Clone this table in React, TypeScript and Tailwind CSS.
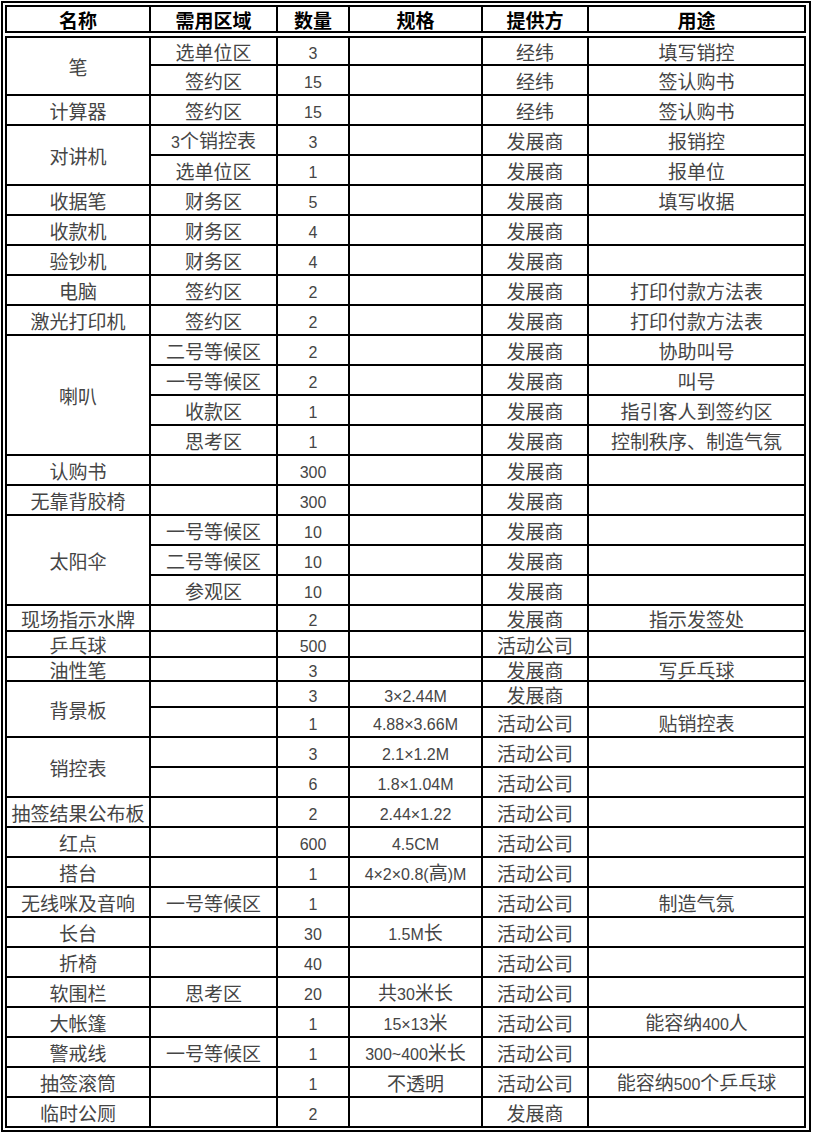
import React from 'react';

type Cell = string | { t: string; rs: number };

const rows: Cell[][] = [
  [{ t: '笔', rs: 2 }, '选单位区', '3', '', '经纬', '填写销控'],
  ['签约区', '15', '', '经纬', '签认购书'],
  ['计算器', '签约区', '15', '', '经纬', '签认购书'],
  [{ t: '对讲机', rs: 2 }, '3个销控表', '3', '', '发展商', '报销控'],
  ['选单位区', '1', '', '发展商', '报单位'],
  ['收据笔', '财务区', '5', '', '发展商', '填写收据'],
  ['收款机', '财务区', '4', '', '发展商', ''],
  ['验钞机', '财务区', '4', '', '发展商', ''],
  ['电脑', '签约区', '2', '', '发展商', '打印付款方法表'],
  ['激光打印机', '签约区', '2', '', '发展商', '打印付款方法表'],
  [{ t: '喇叭', rs: 4 }, '二号等候区', '2', '', '发展商', '协助叫号'],
  ['一号等候区', '2', '', '发展商', '叫号'],
  ['收款区', '1', '', '发展商', '指引客人到签约区'],
  ['思考区', '1', '', '发展商', '控制秩序、制造气氛'],
  ['认购书', '', '300', '', '发展商', ''],
  ['无靠背胶椅', '', '300', '', '发展商', ''],
  [{ t: '太阳伞', rs: 3 }, '一号等候区', '10', '', '发展商', ''],
  ['二号等候区', '10', '', '发展商', ''],
  ['参观区', '10', '', '发展商', ''],
  ['现场指示水牌', '', '2', '', '发展商', '指示发签处'],
  ['乒乓球', '', '500', '', '活动公司', ''],
  ['油性笔', '', '3', '', '发展商', '写乒乓球'],
  [{ t: '背景板', rs: 2 }, '', '3', '3×2.44M', '发展商', ''],
  ['', '1', '4.88×3.66M', '活动公司', '贴销控表'],
  [{ t: '销控表', rs: 2 }, '', '3', '2.1×1.2M', '活动公司', ''],
  ['', '6', '1.8×1.04M', '活动公司', ''],
  ['抽签结果公布板', '', '2', '2.44×1.22', '活动公司', ''],
  ['红点', '', '600', '4.5CM', '活动公司', ''],
  ['搭台', '', '1', '4×2×0.8(高)M', '活动公司', ''],
  ['无线咪及音响', '一号等候区', '1', '', '活动公司', '制造气氛'],
  ['长台', '', '30', '1.5M长', '活动公司', ''],
  ['折椅', '', '40', '', '活动公司', ''],
  ['软围栏', '思考区', '20', '共30米长', '活动公司', ''],
  ['大帐篷', '', '1', '15×13米', '活动公司', '能容纳400人'],
  ['警戒线', '一号等候区', '1', '300~400米长', '活动公司', ''],
  ['抽签滚筒', '', '1', '不透明', '活动公司', '能容纳500个乒乓球'],
  ['临时公厕', '', '2', '', '发展商', ''],
];

const headers = ['名称', '需用区域', '数量', '规格', '提供方', '用途'];

const latin = /^[0-9A-Za-z.×~()]+$/;

// latin runs get Arial-width text, the rest stays CJK
const Mixed = ({ text }: { text: string }) => (
  <span className="leading-[20px] relative top-[1px]">
    {text.split(/([0-9A-Za-z.×~()]+)/).map((part, i) =>
      latin.test(part) ? (
        <span key={i} className="font-['Liberation_Sans',Arial,sans-serif] text-[16px]">
          {part}
        </span>
      ) : (
        part
      )
    )}
  </span>
);

export default function App() {
  return (
    <div className="bg-white min-h-screen">
      <div className="ml-[1px] mt-[1px] w-[810px] border-2 border-black pl-[2px] pr-[3px] py-[2px] font-['Noto_Sans_CJK_SC','Liberation_Sans',sans-serif]">
        <div className="grid grid-cols-[142px_125px_70px_131px_104px_215px] gap-[2px] bg-black border-2 border-black">
          {headers.map(h => (
            <div key={h} className="h-[24px] bg-white flex items-center justify-center text-[19px] font-bold text-black leading-none">
              {h}
            </div>
          ))}
        </div>
        <div className="h-[3px]" />
        <div className="grid grid-cols-[142px_125px_70px_131px_104px_215px] grid-rows-[26px_repeat(18,28px)_24px_24px_22px_24px_repeat(14,28px)] gap-[2px] bg-black border-2 border-black">
          {rows.flatMap((row, r) =>
            row.map((c, i) => {
              const t = typeof c === 'string' ? c : c.t;
              const rs = typeof c === 'string' ? 1 : c.rs;
              return (
                <div
                  key={`${r}-${i}`}
                  className={
                    'bg-white flex items-center justify-center text-[19px] text-[#454545] whitespace-nowrap ' +
                    (rs === 2 ? 'row-span-2' : rs === 3 ? 'row-span-3' : rs === 4 ? 'row-span-4' : '')
                  }
                >
                  <Mixed text={t} />
                </div>
              );
            })
          )}
        </div>
      </div>
    </div>
  );
}
